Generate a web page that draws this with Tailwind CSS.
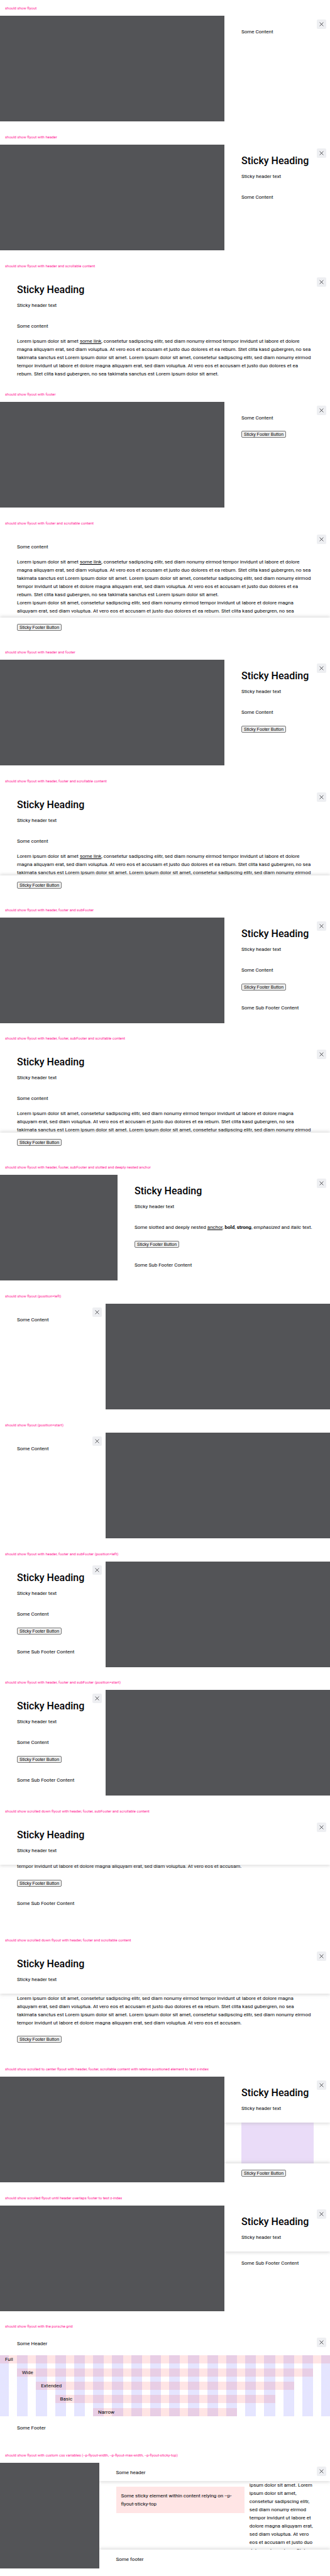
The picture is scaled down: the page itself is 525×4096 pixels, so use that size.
<!DOCTYPE html>
<html lang="en">
<head>
<meta charset="utf-8">
<meta name="viewport" content="width=device-width, initial-scale=1">
<title>Flyout</title>
<script src="https://cdn.jsdelivr.net/npm/@tailwindcss/browser@4"></script>
</head>
<body class="bg-white font-['Roboto',sans-serif] text-[8px] leading-[13px] text-[#010205]">
<svg class="hidden" aria-hidden="true"><symbol id="x" viewBox="0 0 14 14"><path d="M1.2 1.2 12.8 12.8M12.8 1.2 1.2 12.8" fill="none" stroke="#010205" stroke-width="1.3"/></symbol></svg>
<main class="grid min-h-screen auto-rows-fr grid-cols-1">

<section>
<h2 class="flex h-[25px] items-center pl-2 text-[6px] text-[#ff1493]">should show flyout</h2>
<div class="flex h-[168px] bg-[#535457]">
<div class="relative ml-auto flex w-[32%] flex-col overflow-hidden bg-white">
<button aria-label="Close" class="absolute top-[6px] right-[6px] z-20 flex size-[15px] items-center justify-center rounded-[2px] bg-[#eeeff2]"><svg class="size-[7px]"><use href="#x"/></svg></button>
<div class="pt-[19px] pr-[26px] pb-[5px] pl-[27px]">Some Content</div>
</div>
</div>
</section>

<section>
<h2 class="flex h-[25px] items-center pl-2 text-[6px] text-[#ff1493]">should show flyout with header</h2>
<div class="flex h-[168px] bg-[#535457]">
<div class="relative ml-auto flex w-[32%] flex-col overflow-hidden bg-white">
<button aria-label="Close" class="absolute top-[6px] right-[6px] z-20 flex size-[15px] items-center justify-center rounded-[2px] bg-[#eeeff2]"><svg class="size-[7px]"><use href="#x"/></svg></button>
<header class="pt-4 pb-4 pl-[27px]"><h3 class="text-[16px] leading-5 font-medium whitespace-nowrap">Sticky Heading</h3><p class="mt-2">Sticky header text</p></header>
<div class="pt-1 pr-[26px] pb-[5px] pl-[27px]">Some Content</div>
</div>
</div>
</section>

<section>
<h2 class="flex h-[25px] items-center pl-2 text-[6px] text-[#ff1493]">should show flyout with header and scrollable content</h2>
<div class="flex h-[168px] bg-[#535457]">
<div class="relative flex w-full flex-col overflow-hidden bg-white">
<button aria-label="Close" class="absolute top-[6px] right-[6px] z-20 flex size-[15px] items-center justify-center rounded-[2px] bg-[#eeeff2]"><svg class="size-[7px]"><use href="#x"/></svg></button>
<header class="pt-4 pb-4 pl-[27px]"><h3 class="text-[16px] leading-5 font-medium whitespace-nowrap">Sticky Heading</h3><p class="mt-2">Sticky header text</p></header>
<div class="flex flex-col gap-[11px] overflow-hidden pt-1 pl-[27px] whitespace-nowrap"><p>Some content</p>
<p>Lorem ipsum dolor sit amet <a href="#" class="underline">some link</a>, consetetur sadipscing elitr, sed diam nonumy eirmod tempor invidunt ut labore et dolore<br>magna aliquyam erat, sed diam voluptua. At vero eos et accusam et justo duo dolores et ea rebum. Stet clita kasd gubergren, no sea<br>takimata sanctus est Lorem ipsum dolor sit amet. Lorem ipsum dolor sit amet, consetetur sadipscing elitr, sed diam nonumy eirmod<br>tempor invidunt ut labore et dolore magna aliquyam erat, sed diam voluptua. At vero eos et accusam et justo duo dolores et ea<br>rebum. Stet clita kasd gubergren, no sea takimata sanctus est Lorem ipsum dolor sit amet.</p></div>
</div>
</div>
</section>

<section>
<h2 class="flex h-[25px] items-center pl-2 text-[6px] text-[#ff1493]">should show flyout with footer</h2>
<div class="flex h-[168px] bg-[#535457]">
<div class="relative ml-auto flex w-[32%] flex-col overflow-hidden bg-white">
<button aria-label="Close" class="absolute top-[6px] right-[6px] z-20 flex size-[15px] items-center justify-center rounded-[2px] bg-[#eeeff2]"><svg class="size-[7px]"><use href="#x"/></svg></button>
<div class="pt-[19px] pr-[26px] pb-1 pl-[27px]">Some Content</div>
<footer class="flex pt-[10px] pb-[10px] pl-[27px]"><button class="h-[11px] rounded-[2px] border border-[#767676] bg-[#efefef] px-[3px] font-['Liberation_Sans',sans-serif] text-[7px] leading-[9px] whitespace-nowrap text-black">Sticky Footer Button</button></footer>
</div>
</div>
</section>

<section>
<h2 class="flex h-[25px] items-center pl-2 text-[6px] text-[#ff1493]">should show flyout with footer and scrollable content</h2>
<div class="flex h-[168px] bg-[#535457]">
<div class="relative flex w-full flex-col overflow-hidden bg-white">
<button aria-label="Close" class="absolute top-[6px] right-[6px] z-20 flex size-[15px] items-center justify-center rounded-[2px] bg-[#eeeff2]"><svg class="size-[7px]"><use href="#x"/></svg></button>
<div class="flex min-h-0 flex-1 flex-col gap-[11px] overflow-hidden pt-[19px] pl-[27px] whitespace-nowrap"><p>Some content</p>
<p>Lorem ipsum dolor sit amet <a href="#" class="underline">some link</a>, consetetur sadipscing elitr, sed diam nonumy eirmod tempor invidunt ut labore et dolore<br>magna aliquyam erat, sed diam voluptua. At vero eos et accusam et justo duo dolores et ea rebum. Stet clita kasd gubergren, no sea<br>takimata sanctus est Lorem ipsum dolor sit amet. Lorem ipsum dolor sit amet, consetetur sadipscing elitr, sed diam nonumy eirmod<br>tempor invidunt ut labore et dolore magna aliquyam erat, sed diam voluptua. At vero eos et accusam et justo duo dolores et ea<br>rebum. Stet clita kasd gubergren, no sea takimata sanctus est Lorem ipsum dolor sit amet.<br>Lorem ipsum dolor sit amet, consetetur sadipscing elitr, sed diam nonumy eirmod tempor invidunt ut labore et dolore magna<br>aliquyam erat, sed diam voluptua. At vero eos et accusam et justo duo dolores et ea rebum. Stet clita kasd gubergren, no sea<br>takimata sanctus est Lorem ipsum dolor sit amet. Lorem ipsum dolor sit amet, consetetur sadipscing elitr, sed diam nonumy eirmod</p></div>
<footer class="relative z-10 flex bg-white pt-[10px] pb-[9px] pl-[27px] shadow-[0_-2px_5px_rgba(160,160,160,0.35)]"><button class="h-[11px] rounded-[2px] border border-[#767676] bg-[#efefef] px-[3px] font-['Liberation_Sans',sans-serif] text-[7px] leading-[9px] whitespace-nowrap text-black">Sticky Footer Button</button></footer>
</div>
</div>
</section>

<section>
<h2 class="flex h-[25px] items-center pl-2 text-[6px] text-[#ff1493]">should show flyout with header and footer</h2>
<div class="flex h-[168px] bg-[#535457]">
<div class="relative ml-auto flex w-[32%] flex-col overflow-hidden bg-white">
<button aria-label="Close" class="absolute top-[6px] right-[6px] z-20 flex size-[15px] items-center justify-center rounded-[2px] bg-[#eeeff2]"><svg class="size-[7px]"><use href="#x"/></svg></button>
<header class="pt-4 pb-4 pl-[27px]"><h3 class="text-[16px] leading-5 font-medium whitespace-nowrap">Sticky Heading</h3><p class="mt-2">Sticky header text</p></header>
<div class="pt-1 pr-[26px] pb-[5px] pl-[27px]">Some Content</div>
<footer class="flex pt-[10px] pb-[10px] pl-[27px]"><button class="h-[11px] rounded-[2px] border border-[#767676] bg-[#efefef] px-[3px] font-['Liberation_Sans',sans-serif] text-[7px] leading-[9px] whitespace-nowrap text-black">Sticky Footer Button</button></footer>
</div>
</div>
</section>

<section>
<h2 class="flex h-[25px] items-center pl-2 text-[6px] text-[#ff1493]">should show flyout with header, footer and scrollable content</h2>
<div class="flex h-[168px] bg-[#535457]">
<div class="relative flex w-full flex-col overflow-hidden bg-white">
<button aria-label="Close" class="absolute top-[6px] right-[6px] z-20 flex size-[15px] items-center justify-center rounded-[2px] bg-[#eeeff2]"><svg class="size-[7px]"><use href="#x"/></svg></button>
<header class="pt-4 pb-4 pl-[27px]"><h3 class="text-[16px] leading-5 font-medium whitespace-nowrap">Sticky Heading</h3><p class="mt-2">Sticky header text</p></header>
<div class="flex min-h-0 flex-1 flex-col gap-[11px] overflow-hidden pt-1 pl-[27px] whitespace-nowrap"><p>Some content</p>
<p>Lorem ipsum dolor sit amet <a href="#" class="underline">some link</a>, consetetur sadipscing elitr, sed diam nonumy eirmod tempor invidunt ut labore et dolore<br>magna aliquyam erat, sed diam voluptua. At vero eos et accusam et justo duo dolores et ea rebum. Stet clita kasd gubergren, no sea<br>takimata sanctus est Lorem ipsum dolor sit amet. Lorem ipsum dolor sit amet, consetetur sadipscing elitr, sed diam nonumy eirmod</p></div>
<footer class="relative z-10 flex bg-white pt-[10px] pb-[9px] pl-[27px] shadow-[0_-2px_5px_rgba(160,160,160,0.35)]"><button class="h-[11px] rounded-[2px] border border-[#767676] bg-[#efefef] px-[3px] font-['Liberation_Sans',sans-serif] text-[7px] leading-[9px] whitespace-nowrap text-black">Sticky Footer Button</button></footer>
</div>
</div>
</section>

<section>
<h2 class="flex h-[25px] items-center pl-2 text-[6px] text-[#ff1493]">should show flyout with header, footer and subFooter</h2>
<div class="flex h-[168px] bg-[#535457]">
<div class="relative ml-auto flex w-[32%] flex-col overflow-hidden bg-white">
<button aria-label="Close" class="absolute top-[6px] right-[6px] z-20 flex size-[15px] items-center justify-center rounded-[2px] bg-[#eeeff2]"><svg class="size-[7px]"><use href="#x"/></svg></button>
<header class="pt-4 pb-4 pl-[27px]"><h3 class="text-[16px] leading-5 font-medium whitespace-nowrap">Sticky Heading</h3><p class="mt-2">Sticky header text</p></header>
<div class="pt-1 pr-[26px] pb-[5px] pl-[27px]">Some Content</div>
<footer class="flex pt-[10px] pb-[10px] pl-[27px]"><button class="h-[11px] rounded-[2px] border border-[#767676] bg-[#efefef] px-[3px] font-['Liberation_Sans',sans-serif] text-[7px] leading-[9px] whitespace-nowrap text-black">Sticky Footer Button</button></footer>
<div class="pt-[11px] pl-[27px]">Some Sub Footer Content</div>
</div>
</div>
</section>

<section>
<h2 class="flex h-[25px] items-center pl-2 text-[6px] text-[#ff1493]">should show flyout with header, footer, subFooter and scrollable content</h2>
<div class="flex h-[168px] bg-[#535457]">
<div class="relative flex w-full flex-col overflow-hidden bg-white">
<button aria-label="Close" class="absolute top-[6px] right-[6px] z-20 flex size-[15px] items-center justify-center rounded-[2px] bg-[#eeeff2]"><svg class="size-[7px]"><use href="#x"/></svg></button>
<header class="pt-4 pb-4 pl-[27px]"><h3 class="text-[16px] leading-5 font-medium whitespace-nowrap">Sticky Heading</h3><p class="mt-2">Sticky header text</p></header>
<div class="flex min-h-0 flex-1 flex-col gap-[11px] overflow-hidden pt-1 pl-[27px] whitespace-nowrap"><p>Some content</p>
<p>Lorem ipsum dolor sit amet, consetetur sadipscing elitr, sed diam nonumy eirmod tempor invidunt ut labore et dolore magna<br>aliquyam erat, sed diam voluptua. At vero eos et accusam et justo duo dolores et ea rebum. Stet clita kasd gubergren, no sea<br>takimata sanctus est Lorem ipsum dolor sit amet. Lorem ipsum dolor sit amet, consetetur sadipscing elitr, sed diam nonumy eirmod</p></div>
<footer class="relative z-10 flex bg-white pt-[10px] pb-[9px] pl-[27px] shadow-[0_-2px_5px_rgba(160,160,160,0.35)]"><button class="h-[11px] rounded-[2px] border border-[#767676] bg-[#efefef] px-[3px] font-['Liberation_Sans',sans-serif] text-[7px] leading-[9px] whitespace-nowrap text-black">Sticky Footer Button</button></footer>
</div>
</div>
</section>

<section>
<h2 class="flex h-[25px] items-center pl-2 text-[6px] text-[#ff1493]">should show flyout with header, footer, subFooter and slotted and deeply nested anchor</h2>
<div class="flex h-[168px] bg-[#535457]">
<div class="relative ml-auto flex w-[338px] max-w-full flex-col overflow-hidden bg-white">
<button aria-label="Close" class="absolute top-[6px] right-[6px] z-20 flex size-[15px] items-center justify-center rounded-[2px] bg-[#eeeff2]"><svg class="size-[7px]"><use href="#x"/></svg></button>
<header class="pt-4 pb-4 pl-[27px]"><h3 class="text-[16px] leading-5 font-medium whitespace-nowrap">Sticky Heading</h3><p class="mt-2">Sticky header text</p></header>
<div class="pt-1 pb-[5px] pl-[27px] whitespace-nowrap">Some slotted and deeply nested <a href="#" class="underline">anchor</a>, <b class="font-bold">bold</b>, <strong class="font-bold">strong</strong>, <em>emphasized</em> and <i>italic</i> text.</div>
<footer class="flex pt-[10px] pb-[10px] pl-[27px]"><button class="h-[11px] rounded-[2px] border border-[#767676] bg-[#efefef] px-[3px] font-['Liberation_Sans',sans-serif] text-[7px] leading-[9px] whitespace-nowrap text-black">Sticky Footer Button</button></footer>
<div class="pt-[11px] pl-[27px]">Some Sub Footer Content</div>
</div>
</div>
</section>

<section>
<h2 class="flex h-[25px] items-center pl-2 text-[6px] text-[#ff1493]">should show flyout (position=left)</h2>
<div class="flex h-[168px] bg-[#535457]">
<div class="relative flex w-[32%] flex-col overflow-hidden bg-white">
<button aria-label="Close" class="absolute top-[6px] right-[6px] z-20 flex size-[15px] items-center justify-center rounded-[2px] bg-[#eeeff2]"><svg class="size-[7px]"><use href="#x"/></svg></button>
<div class="pt-[19px] pr-[26px] pb-[5px] pl-[27px]">Some Content</div>
</div>
</div>
</section>

<section>
<h2 class="flex h-[25px] items-center pl-2 text-[6px] text-[#ff1493]">should show flyout (position=start)</h2>
<div class="flex h-[168px] bg-[#535457]">
<div class="relative flex w-[32%] flex-col overflow-hidden bg-white">
<button aria-label="Close" class="absolute top-[6px] right-[6px] z-20 flex size-[15px] items-center justify-center rounded-[2px] bg-[#eeeff2]"><svg class="size-[7px]"><use href="#x"/></svg></button>
<div class="pt-[19px] pr-[26px] pb-[5px] pl-[27px]">Some Content</div>
</div>
</div>
</section>

<section>
<h2 class="flex h-[25px] items-center pl-2 text-[6px] text-[#ff1493]">should show flyout with header, footer and subFooter (position=left)</h2>
<div class="flex h-[168px] bg-[#535457]">
<div class="relative flex w-[32%] flex-col overflow-hidden bg-white">
<button aria-label="Close" class="absolute top-[6px] right-[6px] z-20 flex size-[15px] items-center justify-center rounded-[2px] bg-[#eeeff2]"><svg class="size-[7px]"><use href="#x"/></svg></button>
<header class="pt-4 pb-4 pl-[27px]"><h3 class="text-[16px] leading-5 font-medium whitespace-nowrap">Sticky Heading</h3><p class="mt-2">Sticky header text</p></header>
<div class="pt-1 pr-[26px] pb-[5px] pl-[27px]">Some Content</div>
<footer class="flex pt-[10px] pb-[10px] pl-[27px]"><button class="h-[11px] rounded-[2px] border border-[#767676] bg-[#efefef] px-[3px] font-['Liberation_Sans',sans-serif] text-[7px] leading-[9px] whitespace-nowrap text-black">Sticky Footer Button</button></footer>
<div class="pt-[11px] pl-[27px]">Some Sub Footer Content</div>
</div>
</div>
</section>

<section>
<h2 class="flex h-[25px] items-center pl-2 text-[6px] text-[#ff1493]">should show flyout with header, footer and subFooter (position=start)</h2>
<div class="flex h-[168px] bg-[#535457]">
<div class="relative flex w-[32%] flex-col overflow-hidden bg-white">
<button aria-label="Close" class="absolute top-[6px] right-[6px] z-20 flex size-[15px] items-center justify-center rounded-[2px] bg-[#eeeff2]"><svg class="size-[7px]"><use href="#x"/></svg></button>
<header class="pt-4 pb-4 pl-[27px]"><h3 class="text-[16px] leading-5 font-medium whitespace-nowrap">Sticky Heading</h3><p class="mt-2">Sticky header text</p></header>
<div class="pt-1 pr-[26px] pb-[5px] pl-[27px]">Some Content</div>
<footer class="flex pt-[10px] pb-[10px] pl-[27px]"><button class="h-[11px] rounded-[2px] border border-[#767676] bg-[#efefef] px-[3px] font-['Liberation_Sans',sans-serif] text-[7px] leading-[9px] whitespace-nowrap text-black">Sticky Footer Button</button></footer>
<div class="pt-[11px] pl-[27px]">Some Sub Footer Content</div>
</div>
</div>
</section>

<section>
<h2 class="flex h-[25px] items-center pl-2 text-[6px] text-[#ff1493]">should show scrolled down flyout with header, footer, subFooter and scrollable content</h2>
<div class="flex h-[168px] bg-[#535457]">
<div class="relative flex w-full flex-col overflow-hidden bg-white">
<button aria-label="Close" class="absolute top-[6px] right-[6px] z-20 flex size-[15px] items-center justify-center rounded-[2px] bg-[#eeeff2]"><svg class="size-[7px]"><use href="#x"/></svg></button>
<header class="relative z-10 bg-white pt-4 pb-4 pl-[27px] shadow-[0_2px_5px_rgba(160,160,160,0.35)]"><h3 class="text-[16px] leading-5 font-medium whitespace-nowrap">Sticky Heading</h3><p class="mt-2">Sticky header text</p></header>
<!-- scrolled to the end: the last line slides under the header -->
<div class="flex h-[14px] flex-col justify-end overflow-hidden pb-[5px] pl-[27px] whitespace-nowrap"><p>tempor invidunt ut labore et dolore magna aliquyam erat, sed diam voluptua. At vero eos et accusam.</p></div>
<footer class="flex pt-[10px] pb-[10px] pl-[27px]"><button class="h-[11px] rounded-[2px] border border-[#767676] bg-[#efefef] px-[3px] font-['Liberation_Sans',sans-serif] text-[7px] leading-[9px] whitespace-nowrap text-black">Sticky Footer Button</button></footer>
<div class="pt-[10px] pl-[27px]">Some Sub Footer Content</div>
</div>
</div>
</section>

<section>
<h2 class="flex h-[25px] items-center pl-2 text-[6px] text-[#ff1493]">should show scrolled down flyout with header, footer and scrollable content</h2>
<div class="flex h-[168px] bg-[#535457]">
<div class="relative flex w-full flex-col overflow-hidden bg-white">
<button aria-label="Close" class="absolute top-[6px] right-[6px] z-20 flex size-[15px] items-center justify-center rounded-[2px] bg-[#eeeff2]"><svg class="size-[7px]"><use href="#x"/></svg></button>
<header class="relative z-10 bg-white pt-4 pb-4 pl-[27px] shadow-[0_2px_5px_rgba(160,160,160,0.35)]"><h3 class="text-[16px] leading-5 font-medium whitespace-nowrap">Sticky Heading</h3><p class="mt-2">Sticky header text</p></header>
<div class="flex flex-col pt-px pb-1 pl-[27px] whitespace-nowrap"><p>Lorem ipsum dolor sit amet, consetetur sadipscing elitr, sed diam nonumy eirmod tempor invidunt ut labore et dolore magna<br>aliquyam erat, sed diam voluptua. At vero eos et accusam et justo duo dolores et ea rebum. Stet clita kasd gubergren, no sea<br>takimata sanctus est Lorem ipsum dolor sit amet. Lorem ipsum dolor sit amet, consetetur sadipscing elitr, sed diam nonumy eirmod<br>tempor invidunt ut labore et dolore magna aliquyam erat, sed diam voluptua. At vero eos et accusam.</p></div>
<footer class="flex pt-[10px] pb-[10px] pl-[27px]"><button class="h-[11px] rounded-[2px] border border-[#767676] bg-[#efefef] px-[3px] font-['Liberation_Sans',sans-serif] text-[7px] leading-[9px] whitespace-nowrap text-black">Sticky Footer Button</button></footer>
</div>
</div>
</section>

<section>
<h2 class="flex h-[25px] items-center pl-2 text-[6px] text-[#ff1493]">should show scrolled to center flyout with header, footer, scrollable content with relative positioned element to test z-index</h2>
<div class="flex h-[168px] bg-[#535457]">
<div class="relative ml-auto flex w-[32%] flex-col overflow-hidden bg-white">
<button aria-label="Close" class="absolute top-[6px] right-[6px] z-20 flex size-[15px] items-center justify-center rounded-[2px] bg-[#eeeff2]"><svg class="size-[7px]"><use href="#x"/></svg></button>
<header class="relative z-10 bg-white pt-4 pb-4 pl-[27px] shadow-[0_2px_5px_rgba(160,160,160,0.35)]"><h3 class="text-[16px] leading-5 font-medium whitespace-nowrap">Sticky Heading</h3><p class="mt-2">Sticky header text</p></header>
<div class="mr-[26px] ml-[27px] flex-1 bg-[#eadcf8]"></div>
<footer class="relative z-10 flex bg-white pt-[10px] pb-[9px] pl-[27px] shadow-[0_-2px_5px_rgba(160,160,160,0.35)]"><button class="h-[11px] rounded-[2px] border border-[#767676] bg-[#efefef] px-[3px] font-['Liberation_Sans',sans-serif] text-[7px] leading-[9px] whitespace-nowrap text-black">Sticky Footer Button</button></footer>
</div>
</div>
</section>

<section>
<h2 class="flex h-[25px] items-center pl-2 text-[6px] text-[#ff1493]">should show scrolled flyout until header overlaps footer to test z-index</h2>
<div class="flex h-[168px] bg-[#535457]">
<div class="relative ml-auto flex w-[32%] flex-col overflow-hidden bg-white">
<button aria-label="Close" class="absolute top-[6px] right-[6px] z-20 flex size-[15px] items-center justify-center rounded-[2px] bg-[#eeeff2]"><svg class="size-[7px]"><use href="#x"/></svg></button>
<header class="relative z-10 bg-white pt-4 pb-4 pl-[27px] shadow-[0_2px_5px_rgba(160,160,160,0.35)]"><h3 class="text-[16px] leading-5 font-medium whitespace-nowrap">Sticky Heading</h3><p class="mt-2">Sticky header text</p></header>
<div class="pt-3 pl-[27px]">Some Sub Footer Content</div>
</div>
</div>
</section>

<section>
<h2 class="flex h-[25px] items-center pl-2 text-[6px] text-[#ff1493]">should show flyout with the porsche grid</h2>
<div class="flex h-[168px] bg-[#535457]">
<div class="relative flex w-full flex-col overflow-hidden bg-white">
<button aria-label="Close" class="absolute top-[6px] right-[6px] z-20 flex size-[15px] items-center justify-center rounded-[2px] bg-[#eeeff2]"><svg class="size-[7px]"><use href="#x"/></svg></button>
<header class="pt-[9px] pb-[7px] pl-[27px]">Some Header</header>
<div class="mt-[5px] grid grid-cols-[14px_repeat(16,minmax(0,1fr))_14px] grid-rows-[repeat(5,13px)] gap-x-[13px] gap-y-2">
<div class="col-start-1 row-span-5 row-start-1 bg-[#0000ff]/10"></div>
<div class="col-start-2 row-span-5 row-start-1 bg-[#0000ff]/10"></div>
<div class="col-start-3 row-span-5 row-start-1 bg-[#0000ff]/10"></div>
<div class="col-start-4 row-span-5 row-start-1 bg-[#0000ff]/10"></div>
<div class="col-start-5 row-span-5 row-start-1 bg-[#0000ff]/10"></div>
<div class="col-start-6 row-span-5 row-start-1 bg-[#0000ff]/10"></div>
<div class="col-start-7 row-span-5 row-start-1 bg-[#0000ff]/10"></div>
<div class="col-start-8 row-span-5 row-start-1 bg-[#0000ff]/10"></div>
<div class="col-start-9 row-span-5 row-start-1 bg-[#0000ff]/10"></div>
<div class="col-start-10 row-span-5 row-start-1 bg-[#0000ff]/10"></div>
<div class="col-start-11 row-span-5 row-start-1 bg-[#0000ff]/10"></div>
<div class="col-start-12 row-span-5 row-start-1 bg-[#0000ff]/10"></div>
<div class="col-start-[13] row-span-5 row-start-1 bg-[#0000ff]/10"></div>
<div class="col-start-[14] row-span-5 row-start-1 bg-[#0000ff]/10"></div>
<div class="col-start-[15] row-span-5 row-start-1 bg-[#0000ff]/10"></div>
<div class="col-start-[16] row-span-5 row-start-1 bg-[#0000ff]/10"></div>
<div class="col-start-[17] row-span-5 row-start-1 bg-[#0000ff]/10"></div>
<div class="col-start-[18] row-span-5 row-start-1 bg-[#0000ff]/10"></div>
<div class="col-[1/19] row-start-1 bg-[#ff0000]/10 pl-2">Full</div>
<div class="col-[2/18] row-start-2 bg-[#ff0000]/10 pl-2">Wide</div>
<div class="col-[3/17] row-start-3 bg-[#ff0000]/10 pl-2">Extended</div>
<div class="col-[4/16] row-start-4 bg-[#ff0000]/10 pl-2">Basic</div>
<div class="col-[6/14] row-start-5 bg-[#ff0000]/10 pl-2">Narrow</div>
</div>
<footer class="pt-3 pl-[27px]">Some Footer</footer>
</div>
</div>
</section>

<section>
<h2 class="flex h-[25px] items-center pl-2 text-[6px] text-[#ff1493]">should show flyout with custom css variables (--p-flyout-width, --p-flyout-max-width, --p-flyout-sticky-top)</h2>
<div class="flex h-[168px] bg-[#535457]">
<div class="relative ml-auto flex w-[70%] flex-col overflow-hidden bg-white">
<button aria-label="Close" class="absolute top-[6px] right-[6px] z-20 flex size-[15px] items-center justify-center rounded-[2px] bg-[#eeeff2]"><svg class="size-[7px]"><use href="#x"/></svg></button>
<header class="relative z-10 bg-white pt-[9px] pb-[7px] pl-[27px] shadow-[0_2px_5px_rgba(160,160,160,0.35)]">Some header</header>
<div class="grid min-h-0 flex-1 grid-cols-[2fr_1fr] gap-2 overflow-hidden pr-[26px] pl-[27px] whitespace-nowrap">
<div class="mt-[9px] self-start bg-[#ff0000]/10 p-2">Some sticky element within content relying on --p-<br>flyout-sticky-top</div>
<p class="min-w-0 self-center">ipsum dolor sit amet. Lorem<br>ipsum dolor sit amet,<br>consetetur sadipscing elitr,<br>sed diam nonumy eirmod<br>tempor invidunt ut labore et<br>dolore magna aliquyam erat,<br>sed diam voluptua. At vero<br>eos et accusam et justo duo<br>dolores et ea rebum. Stet</p>
</div>
<footer class="relative z-10 bg-white pt-[9px] pb-2 pl-[27px] shadow-[0_-2px_5px_rgba(160,160,160,0.35)]">Some footer</footer>
</div>
</div>
</section>

</main>
</body>
</html>
